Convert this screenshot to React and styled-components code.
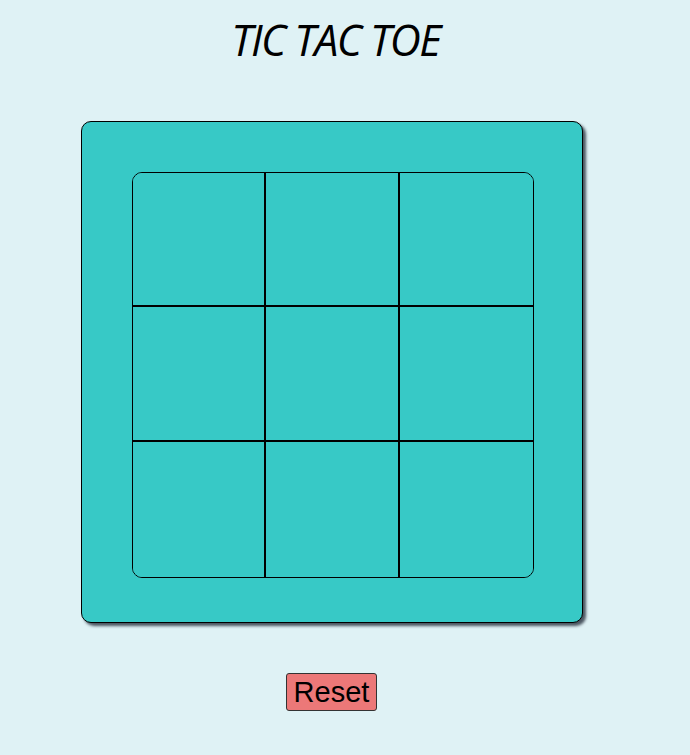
import React, { useState } from 'react';
import styled, { createGlobalStyle } from 'styled-components';

const GlobalStyle = createGlobalStyle`
  html, body {
    margin: 0;
    padding: 0;
    background-color: #dff2f5;
  }
`;

const Page = styled.div`
  width: 663px;
  display: flex;
  flex-direction: column;
  align-items: center;
  padding-top: 12px;
`;

const Title = styled.h1`
  margin: 0 0 0 8px;
  font-family: 'Open Sans', sans-serif;
  font-style: italic;
  font-weight: 400;
  font-size: 43px;
  letter-spacing: -1.6px;
  line-height: 56px;
  color: #000;
`;

const Board = styled.div`
  margin-top: 53px;
  width: 502px;
  height: 502px;
  box-sizing: border-box;
  padding: 50px 48px 45px 50px;
  background-color: #37c9c6;
  border: 1px solid #000;
  border-radius: 10px;
  box-shadow: 3px 3px 3px #4a5560;
`;

const Grid = styled.div`
  display: grid;
  grid-template-columns: 133px 134px 133px;
  grid-template-rows: 134px 135px 135px;
  border: 1px solid #000;
  border-radius: 10px;
  overflow: hidden;
  width: fit-content;
`;

const Cell = styled.div`
  border-right: ${p => (p.$lastCol ? 'none' : '2px solid #000')};
  border-bottom: ${p => (p.$lastRow ? 'none' : '2px solid #000')};
  background-color: #37c9c6;
  display: flex;
  align-items: center;
  justify-content: center;
  font-family: 'Open Sans', sans-serif;
  font-size: 72px;
  cursor: pointer;
`;

const ResetButton = styled.button`
  margin-top: 50px;
  padding: 1px 7px;
  font-family: 'Liberation Sans', Arial, sans-serif;
  font-size: 29px;
  line-height: 34px;
  color: #000;
  background-color: #ec7878;
  border: 1px solid #333;
  border-radius: 3px;
  cursor: pointer;
`;

export default function App() {
  const [cells, setCells] = useState(Array(9).fill(''));
  const [turn, setTurn] = useState('X');

  const play = i => {
    if (cells[i]) return;
    const next = [...cells];
    next[i] = turn;
    setCells(next);
    setTurn(turn === 'X' ? 'O' : 'X');
  };

  return (
    <>
      <GlobalStyle />
      <Page>
        <Title>TIC TAC TOE</Title>
        <Board>
          <Grid>
            {cells.map((c, i) => (
              <Cell
                key={i}
                $lastCol={i % 3 === 2}
                $lastRow={i >= 6}
                onClick={() => play(i)}
              >
                {c}
              </Cell>
            ))}
          </Grid>
        </Board>
        <ResetButton onClick={() => { setCells(Array(9).fill('')); setTurn('X'); }}>
          Reset
        </ResetButton>
      </Page>
    </>
  );
}
